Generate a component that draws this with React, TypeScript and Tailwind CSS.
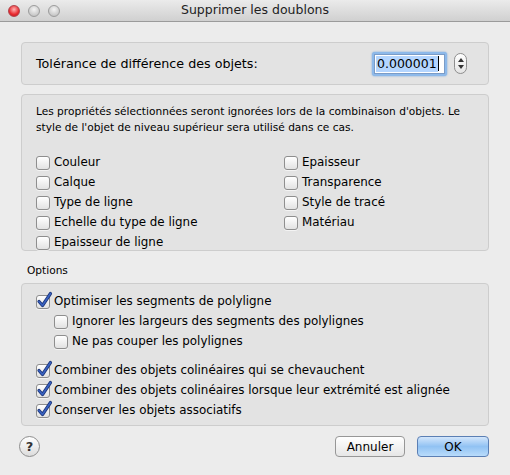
import React from 'react';

const font = { fontFamily: '"DejaVu Sans", "Liberation Sans", sans-serif' };

const Box: React.FC<{ checked?: boolean }> = ({ checked }) => (
  <span className="relative inline-block w-[14px] h-[14px] shrink-0 rounded-[3px] border border-[#8e8e8e] bg-gradient-to-b from-white to-[#e2e2e2] shadow-[0_1px_0_rgba(255,255,255,0.6)]">
    {checked && (
      <svg className="absolute -left-[1px] -top-[5px]" width="17" height="18" viewBox="0 0 17 18">
        <path d="M3 10.5 L6.5 14.5 L14.5 2.5" fill="none" stroke="#1d367a" strokeWidth="3.2" strokeLinecap="round" strokeLinejoin="round" />
        <path d="M3 10.5 L6.5 14.5 L14.5 2.5" fill="none" stroke="#3a62c0" strokeWidth="1.6" strokeLinecap="round" strokeLinejoin="round" />
      </svg>
    )}
  </span>
);

const Check: React.FC<{ label: string; checked?: boolean; indent?: boolean }> = ({ label, checked, indent }) => (
  <label className={`flex items-center gap-[4px] h-[20px] text-[11.9px] text-black ${indent ? 'pl-[18px]' : ''}`}>
    <Box checked={checked} />
    <span>{label}</span>
  </label>
);

export default function App() {
  return (
    <div style={font} className="w-[510px] h-[475px] bg-[#ececec] flex flex-col overflow-hidden">
      {/* title bar */}
      <div className="relative h-[22px] shrink-0 bg-gradient-to-b from-[#ebebeb] to-[#d0d0d0] border-b border-[#9b9b9b] flex items-center justify-center">
        <div className="absolute left-[8px] top-[5px] flex gap-[8px]">
          <span className="w-[12px] h-[12px] rounded-full border border-[#b1424a] bg-[radial-gradient(circle_at_50%_35%,#ffb4b4,#e82a2f_60%,#b9141c)]" />
          <span className="w-[12px] h-[12px] rounded-full border border-[#9c9c9c] bg-[radial-gradient(circle_at_50%_35%,#f4f4f4,#cfcfcf_60%,#b5b5b5)]" />
          <span className="w-[12px] h-[12px] rounded-full border border-[#9c9c9c] bg-[radial-gradient(circle_at_50%_35%,#f4f4f4,#cfcfcf_60%,#b5b5b5)]" />
        </div>
        <span className="text-[12.5px] text-[#222]">Supprimer les doublons</span>
      </div>

      <div className="flex flex-col px-[21px] pt-[20px]">
        {/* tolerance */}
        <div className="h-[43px] rounded-[4px] border border-[#cdcdcd] bg-[#e3e3e3] flex items-center pl-[14px] pr-[21px]">
          <span className="text-[12.7px] text-black flex-1">Tolérance de différence des objets:</span>
          <div className="rounded-[3px] p-[2px] bg-[#8db9ea] shadow-[0_0_2px_#6a9fdc]">
            <div className="w-[71px] h-[20px] bg-white border border-[#7b9cc7] flex items-center pl-[1px]">
              <span className="bg-[#b4d5fe] text-[12.5px] leading-[16px] px-[1px] text-black">0.000001</span>
              <span className="w-px h-[15px] bg-black" />
            </div>
          </div>
          <div className="ml-[7px] w-[13px] h-[21px] rounded-full border border-[#8e8e8e] bg-gradient-to-b from-white to-[#e4e4e4] flex flex-col items-center justify-center gap-[3px]">
            <svg width="6" height="4" viewBox="0 0 6 4"><path d="M0 4 L3 0 L6 4 Z" fill="#333" /></svg>
            <svg width="6" height="4" viewBox="0 0 6 4"><path d="M0 0 L3 4 L6 0 Z" fill="#333" /></svg>
          </div>
        </div>

        {/* properties */}
        <div className="mt-[9px] h-[157px] rounded-[4px] border border-[#cdcdcd] bg-[#e3e3e3] pl-[14px] pr-[10px] pt-[8px]">
          <p className="text-[10.6px] leading-[16px] text-black">
            Les propriétés sélectionnées seront ignorées lors de la combinaison d'objets. Le style de l'objet de niveau supérieur sera utilisé dans ce cas.
          </p>
          <div className="mt-[18px] grid grid-cols-[248px_1fr]">
            <div className="flex flex-col">
              <Check label="Couleur" />
              <Check label="Calque" />
              <Check label="Type de ligne" />
              <Check label="Echelle du type de ligne" />
              <Check label="Epaisseur de ligne" />
            </div>
            <div className="flex flex-col">
              <Check label="Epaisseur" />
              <Check label="Transparence" />
              <Check label="Style de tracé" />
              <Check label="Matériau" />
            </div>
          </div>
        </div>

        {/* options */}
        <div className="mt-[12px] pl-[6px] text-[10.6px] leading-[15px] text-black">Options</div>
        <div className="mt-[5px] h-[143px] rounded-[4px] border border-[#cdcdcd] bg-[#e3e3e3] pl-[14px] pt-[8px] flex flex-col">
          <Check label="Optimiser les segments de polyligne" checked />
          <Check label="Ignorer les largeurs des segments des polylignes" indent />
          <Check label="Ne pas couper les polylignes" indent />
          <div className="h-[9px]" />
          <Check label="Combiner des objets colinéaires qui se chevauchent" checked />
          <Check label="Combiner des objets colinéaires lorsque leur extrémité est alignée" checked />
          <Check label="Conserver les objets associatifs" checked />
        </div>

        {/* buttons */}
        <div className="mt-[10px] flex items-center">
          <button className="-ml-[2px] w-[21px] h-[21px] rounded-full border border-[#8e8e8e] bg-gradient-to-b from-white to-[#dcdcdc] text-[13px] font-bold leading-none text-[#333] flex items-center justify-center">?</button>
          <div className="flex-1" />
          <button className="w-[70px] h-[21px] rounded-[4px] border border-[#979797] bg-gradient-to-b from-white to-[#e6e6e6] text-[12px] text-black">Annuler</button>
          <button className="ml-[12px] w-[72px] h-[21px] rounded-[4px] border border-[#5b7fb4] bg-gradient-to-b from-[#d3e6fb] via-[#91c2f3] to-[#b9dcfb] text-[12px] text-black">OK</button>
        </div>
      </div>
    </div>
  );
}
